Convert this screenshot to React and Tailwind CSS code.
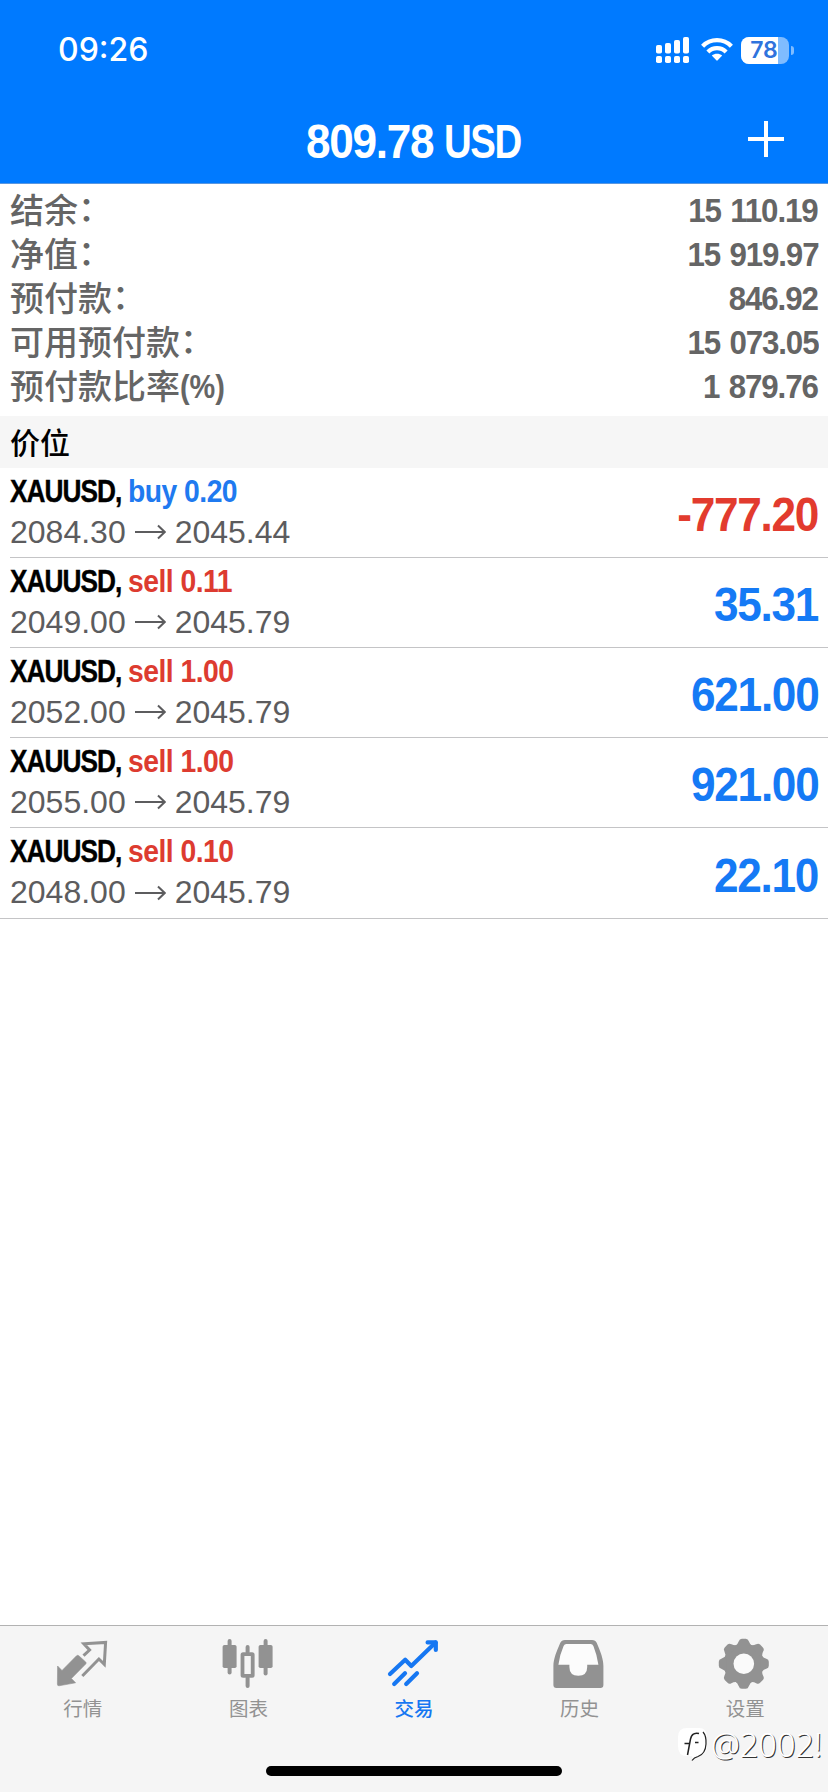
const summary = [
  { label: '结余', suffix: '：', value: '15 110.19' },
  { label: '净值', suffix: '：', value: '15 919.97' },
  { label: '预付款', suffix: '：', value: '846.92' },
  { label: '可用预付款', suffix: '：', value: '15 073.05' },
  { label: '预付款比率', suffix: '(%)', value: '1 879.76' },
];

const positions = [
  { symbol: 'XAUUSD', side: 'buy', volume: '0.20', open: '2084.30', current: '2045.44', profit: '-777.20' },
  { symbol: 'XAUUSD', side: 'sell', volume: '0.11', open: '2049.00', current: '2045.79', profit: '35.31' },
  { symbol: 'XAUUSD', side: 'sell', volume: '1.00', open: '2052.00', current: '2045.79', profit: '621.00' },
  { symbol: 'XAUUSD', side: 'sell', volume: '1.00', open: '2055.00', current: '2045.79', profit: '921.00' },
  { symbol: 'XAUUSD', side: 'sell', volume: '0.10', open: '2048.00', current: '2045.79', profit: '22.10' },
];

const QuotesIcon = () => (
  <svg width="56" height="52" viewBox="0 0 56 52">
    <path
      d="M2.6 28 7 32.5 21.3 18q1.4-1.4 2.8 0l6.6 6q1 1 0 2L16.4 40.5l4.2 4.3L4 47.8q-1.6 0-1.6-1.6z"
      fill="currentColor"
      stroke="currentColor"
      strokeWidth="0.6"
      strokeLinejoin="round"
    />
    <path
      d="M28.5 17.7 34.6 12 28.8 5.7 50.6 4.4 49.3 26.3 43.9 21 27.3 38"
      fill="none"
      stroke="currentColor"
      strokeWidth="3"
    />
  </svg>
);

const ChartIcon = () => (
  <svg width="56" height="52" viewBox="0 0 56 52">
    <g fill="currentColor">
      <rect x="7.6" y="1" width="4" height="35.5" rx="2" />
      <rect x="2.6" y="7" width="14" height="23" rx="1.8" />
      <rect x="43.6" y="1" width="4" height="36.5" rx="2" />
      <rect x="38.6" y="7" width="14" height="23" rx="1.8" />
      <rect x="25.6" y="7" width="4" height="9" rx="2" />
      <rect x="25.6" y="38" width="4" height="12" rx="2" />
    </g>
    <rect x="22.5" y="16.1" width="10.2" height="21.8" rx="0.6" fill="none" stroke="currentColor" strokeWidth="3.8" />
  </svg>
);

const TradeIcon = () => (
  <svg
    width="56"
    height="52"
    viewBox="0 0 56 52"
    fill="none"
    stroke="currentColor"
    strokeWidth="4.2"
    strokeLinecap="round"
    strokeLinejoin="round"
  >
    <path d="M4 36 19.2 21.7 25.3 28 49.6 4.6" />
    <path d="M41.6 4.4H49.8V12" />
    <path d="M8.2 46 19 35.2M20.2 46 31 35.2" />
  </svg>
);

const HistoryIcon = () => (
  <svg width="56" height="52" viewBox="0 0 56 52">
    <path
      fill="currentColor"
      d="M13 2H40Q43.6 2 44.8 5C48.500 13.500 51.400 21 51.400 28V47q0 3-3 3h-44q-3 0-3-3V28C1.400 21 4.500 13.500 8.200 5Q9.500 2 13 2z"
    />
    <path
      fill="#fcfcfc"
      d="M14.400 6q-2 0-2.800 2Q7.600 17 6.400 26.700H17.400V29Q17.400 37.700 26.300 37.700T35.200 29V26.700H46.400Q45 17 41.400 8q-.8-2-2.800-2z"
    />
  </svg>
);

const SettingsIcon = () => (
  <svg width="56" height="52" viewBox="0 0 56 52">
    <g transform="translate(26.800 25.700)">
      <g fill="currentColor">
        <circle r="20" />
        {[0, 45, 90, 135, 180, 225, 270, 315].map((angle) => (
          <path key={angle} transform={`rotate(${angle})`} d="M-9.500-17Q-6-19-5-22.500-4.300-25-2-25H2Q4.300-25 5-22.500 6-19 9.500-17z" />
        ))}
      </g>
      <circle r="10.300" fill="#fafafa" />
    </g>
  </svg>
);

const tabs = [
  { label: '行情', icon: QuotesIcon },
  { label: '图表', icon: ChartIcon },
  { label: '交易', icon: TradeIcon, active: true },
  { label: '历史', icon: HistoryIcon },
  { label: '设置', icon: SettingsIcon },
];

const StatusBar = () => (
  <div className="flex h-[100px] items-center justify-between pl-[58px] pr-[34px]">
    <span className="font-['Inter',sans-serif] text-[32px] font-medium leading-none text-white">09:26</span>
    <div className="flex items-center">
      {/* Señal de doble SIM */}
      <svg width="34" height="28" viewBox="0 0 34 28" fill="#fff">
        <rect x="0" y="9" width="6" height="8.500" rx="1.800" />
        <rect x="9" y="7" width="6" height="10.500" rx="1.800" />
        <rect x="18" y="4" width="6" height="13.500" rx="1.800" />
        <rect x="27" y="1" width="6" height="16.500" rx="1.800" />
        <rect x="0" y="20" width="6" height="7" rx="1.800" />
        <rect x="9" y="20" width="6" height="7" rx="1.800" />
        <rect x="18" y="20" width="6" height="7" rx="1.800" />
        <rect x="27" y="20" width="6" height="7" rx="1.800" />
      </svg>
      <svg className="ml-[10px]" width="34" height="28" viewBox="0 0 34 28">
        <g fill="none" stroke="#fff" strokeWidth="4.300">
          <path d="M2.600 10.200C10.500 2.200 23.500 2.200 31.400 10.200" />
          <path d="M7.900 16C13 10.900 21 10.900 26.100 16" />
        </g>
        <path d="M11.800 19.600C14.800 17 19.200 17 22.200 19.600L17.700 24.300Q17 25 16.300 24.300z" fill="#fff" />
      </svg>
      <div className="ml-[7px] flex items-center">
        <div className="relative flex h-[27px] w-12 items-center justify-center overflow-hidden rounded-[8px] bg-[#7fbcff]">
          <div className="absolute inset-y-0 left-0 w-[37px] bg-white" />
          <span className="relative -left-px font-['Inter',sans-serif] text-[23px] font-semibold leading-none text-[#2f73dd]">
            78
          </span>
        </div>
        <div className="ml-[2px] h-[9px] w-[3px] rounded-r-full bg-[#7fbcff]" />
      </div>
    </div>
  </div>
);

const Header = () => (
  <header className="h-[184px] border-b border-[#5a97e0] bg-[#007aff]">
    <StatusBar />
    <div className="grid h-[83px] grid-cols-3 items-center">
      <span />
      <h1 className="flex justify-center whitespace-nowrap pt-[1px] font-['Liberation_Sans',sans-serif] text-[48px] font-bold leading-none text-white">
        <span className="w-[138px]">
          <span className="inline-block origin-left scale-x-[0.92] tracking-[-1.4px]">809.78</span>
        </span>
        <span className="w-[79px]">
          <span className="inline-block origin-left scale-x-[0.8] tracking-[-1.8px]">USD</span>
        </span>
      </h1>
      <div className="flex justify-end pb-[5px] pr-[44px]">
        <svg width="36" height="36" viewBox="0 0 36 36" stroke="#fff" strokeWidth="4">
          <path d="M18 0V36M0 18H36" />
        </svg>
      </div>
    </div>
  </header>
);

const PositionRow = ({ position, last }) => {
  const isBuy = position.side === 'buy';
  const isLoss = position.profit.startsWith('-');

  return (
    <div className={last ? 'border-b border-[#c4c4c6]' : 'pl-[10px]'}>
      <div
        className={`flex h-[90px] items-center justify-between pr-[10px] ${last ? 'pl-[10px]' : 'border-b border-[#c4c4c6]'}`}
      >
        <div className="pb-[2px]">
          <div className="flex whitespace-nowrap font-['Liberation_Sans',sans-serif] text-[32px] font-bold leading-[41px] text-black">
            <span className="w-[118px]">
              <span className="inline-block origin-left scale-x-[0.82] tracking-[-1.2px] [-webkit-text-stroke:0.4px]">
                {`${position.symbol},`}
              </span>
            </span>
            <span
              className={`inline-block origin-left scale-x-[0.885] tracking-[-0.6px] ${isBuy ? 'text-[#1f7af0]' : 'text-[#dd3b30]'}`}
            >
              {`${position.side} ${position.volume}`}
            </span>
          </div>
          <div className="flex items-center font-['Liberation_Sans',sans-serif] text-[32px] leading-[41px] text-[#5c5c5e]">
            <span>{position.open}</span>
            <svg
              className="ml-[9px] mr-[9px]"
              width="31"
              height="16"
              viewBox="0 0 31 16"
              fill="none"
              stroke="currentColor"
              strokeWidth="2"
            >
              <path d="M0 8H29.500M23 1.500 29.700 8 23 14.500" />
            </svg>
            <span>{position.current}</span>
          </div>
        </div>
        <span
          className={`origin-right scale-x-[0.92] pt-[5px] font-['Liberation_Sans',sans-serif] text-[48px] font-bold leading-none tracking-[-1.4px] ${
            isLoss ? 'text-[#e23b2e]' : 'text-[#157af5]'
          }`}
        >
          {position.profit}
        </span>
      </div>
    </div>
  );
};

const TabBar = () => (
  <nav className="relative flex h-[167px] flex-col items-center justify-between border-t border-[#b2b2b2] bg-[#f5f5f5] pb-4">
    <div className="grid w-full grid-cols-5 pt-3">
      {tabs.map(({ label, icon: Icon, active }) => (
        <div
          key={label}
          className={`flex flex-col items-center gap-[5px] ${active ? 'text-[#1677f2]' : 'text-[#929292]'}`}
        >
          <Icon />
          <span
            className={`font-['Noto_Sans_CJK_SC',sans-serif] text-[19.5px] leading-[26px] ${active ? 'font-medium' : ''}`}
          >
            {label}
          </span>
        </div>
      ))}
    </div>
    <div className="h-[10px] w-[296px] rounded-full bg-black" />
    {/* Marca de agua */}
    <div className="absolute bottom-[29px] right-[6px] flex items-center gap-[2px]">
      <svg width="32" height="36" viewBox="0 0 32 36">
        <path d="M10 1H22Q30 1 30 10V19Q30 28 22 29L16 33 15 29H10Q1 29 1 19V10Q1 1 10 1z" fill="#fff" />
        <path d="M26 5Q29.500 9 29 17 28.500 27 21 29.500 17 30.500 15 33.500" fill="none" stroke="#222" strokeWidth="1.200" />
        <path d="M22 6.500Q15 5 13.500 12L10.500 28M7.500 16.500H13M18 15.500H21.500" fill="none" stroke="#222" strokeWidth="1.500" />
      </svg>
      <span className="font-['Noto_Sans',sans-serif] text-[32.5px] font-light leading-[36px] text-white [text-shadow:1px_1px_0_#333]">
        @2002!
      </span>
    </div>
  </nav>
);

const App = () => {
  return (
    <div className="flex h-[1792px] w-[828px] flex-col overflow-hidden bg-white">
      <Header />

      <section className="h-[232px] px-[10px] pt-[4px]">
        {summary.map((row) => (
          <div key={row.label} className="flex h-11 items-center justify-between text-[34px] leading-none text-[#656565]">
            <div className="flex items-start pb-[2px]">
              <span className="font-['Noto_Sans_CJK_SC',sans-serif] font-medium">{row.label}</span>
              {row.suffix === '：' ? (
                <span className="-mt-[2px] font-['Noto_Sans_CJK_SC',sans-serif] font-medium">{row.suffix}</span>
              ) : (
                <span className="origin-left scale-x-[0.85] pt-px font-['Liberation_Sans',sans-serif] font-bold">
                  {row.suffix}
                </span>
              )}
            </div>
            <span className="origin-right scale-x-[0.92] font-['Liberation_Sans',sans-serif] font-bold tracking-[-1.2px] [word-spacing:2px]">
              {row.value}
            </span>
          </div>
        ))}
      </section>

      <div className="flex h-[52px] items-center bg-[#f6f6f6] px-[10px] pb-[2px] font-['Noto_Sans_CJK_SC',sans-serif] text-[30px] font-medium leading-none text-black">
        价位
      </div>

      <main className="flex-1">
        {positions.map((position, index) => (
          <PositionRow key={position.open} position={position} last={index === positions.length - 1} />
        ))}
      </main>

      <TabBar />
    </div>
  );
};

export default App;
